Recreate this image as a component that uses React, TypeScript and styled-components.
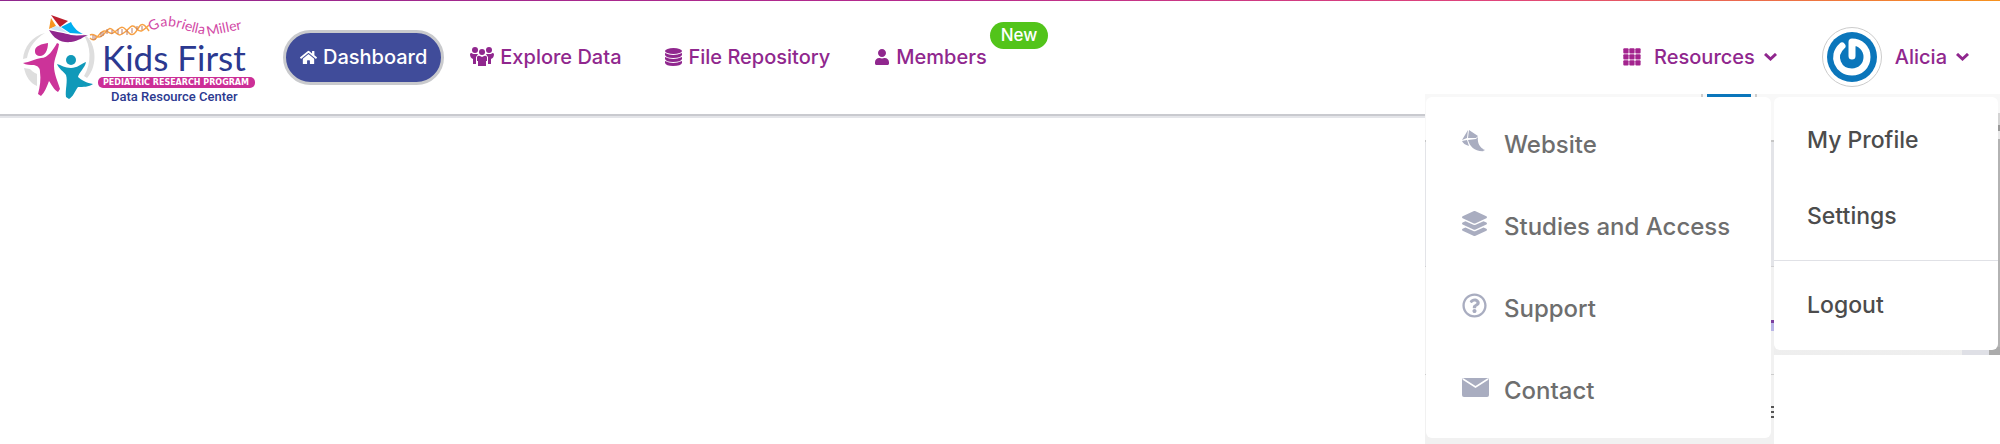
import React from "react";
import styled, { createGlobalStyle } from "styled-components";
import { FaHome, FaLayerGroup, FaUser, FaRegQuestionCircle } from "react-icons/fa";

const Global = createGlobalStyle`
  * { box-sizing: border-box; }
  body { margin: 0; background: #fff; font-family: Inter, "Liberation Sans", sans-serif; }
  button { font: inherit; border: 0; background: none; padding: 0; cursor: pointer; }
  svg { display: block; flex: none; }
`;

const Page = styled.div`
  position: relative;
  min-height: 100vh;
`;

const Header = styled.header`
  display: flex;
  align-items: center;
  height: 118px;
  padding: 0 31px 2px 19px;
  border-bottom: 2px solid #e4e5e9;
  box-shadow: inset 0 -2px 0 #c9cacf;
  background: linear-gradient(90deg, #90278e, #b52a8e 45%, #e0457b 75%, #f6921e) top / 100% 1px no-repeat;
`;

const LogoLink = styled.a`
  display: block;
  margin-right: 24px;
`;

const Nav = styled.nav`
  display: flex;
  align-items: center;
  flex: 1;
`;

const NavLink = styled.a<{ $active?: boolean }>`
  display: flex;
  align-items: center;
  gap: 6px;
  height: 55px;
  padding: 0 14px;
  margin-right: ${(p) => (p.$active ? "12px" : "16px")};
  border: ${(p) => (p.$active ? "3px solid #c9cacd" : "0")};
  border-radius: 28px;
  background: ${(p) => (p.$active ? "#404c9a" : "transparent")};
  color: ${(p) => (p.$active ? "#fff" : "#90278e")};
  font-size: 20px;
  font-weight: 500;
  text-decoration: none;
  white-space: nowrap;
`;

const Badged = styled.span`
  position: relative;
`;

const Badge = styled.span`
  position: absolute;
  left: calc(100% + 3px);
  top: -23px;
  height: 27px;
  padding: 0 11px;
  border-radius: 14px;
  background: #52c41a;
  color: #fff;
  font-size: 17px;
  line-height: 27px;
`;

const Actions = styled.div`
  display: flex;
  align-items: center;
  gap: 45px;
`;

const Trigger = styled.button<{ $gap: number }>`
  && {
    display: flex;
    align-items: center;
    gap: ${(p) => p.$gap}px;
    color: #90278e;
    font-size: 20px;
    font-weight: 500;
  }
`;

const TriggerLabel = styled.span`
  display: flex;
  align-items: center;
  gap: 9px;
`;

const Avatar = styled.span`
  width: 60px;
  height: 60px;
  padding: 4px;
  border: 1px solid #ccc;
  border-radius: 50%;
`;

const MenuFrame = styled.div<{ $right: number; $width: number }>`
  position: absolute;
  top: 94px;
  right: ${(p) => p.$right}px;
  width: ${(p) => p.$width}px;
`;

const ResourcesFrame = styled(MenuFrame)`
  padding: 3px 3px 6px 1px;
  background:
    linear-gradient(#7b3fa0 0 3px, #b9b5e6 3px) right 0 top 226px / 3px 11px no-repeat,
    linear-gradient(#555 0 2px, #eee 2px 5px, #555 5px 7px, #eee 7px 10px, #555 10px) right 0 top 312px / 3px 12px no-repeat,
    linear-gradient(90deg, #ccc 0 2px, #f8f8f8 2px 6px, #0b76bb 6px 50px, #f8f8f8 50px 54px, #ccc 54px) right 17px top 0 / 56px 3px no-repeat,
    linear-gradient(#f8f8f8 0 46px, #c6c6c6 46px 48px, #e3e4e8 48px 172px, #d0d0d2 172px 173px, #f1f1f1 173px 280px, #ccc 280px 281px, #f1f1f1 281px);
`;

const AccountFrame = styled(MenuFrame)`
  padding: 3px 2px 5px 0;
  background:
    linear-gradient(90deg, #dfe0e6 0 27px, #ababab 27px) right bottom / 38px 8px no-repeat,
    linear-gradient(#f8f8f8 0 19px, #d4d4d4 19px 31px, #999 31px 37px, #e8e8e8 37px 45px, #b3b3b3 45px) right top / 8px 100% no-repeat,
    linear-gradient(#f8f8f8 0 50%, #eee);
`;

const Panel = styled.ul<{ $pad: string }>`
  list-style: none;
  margin: 0;
  padding: ${(p) => p.$pad};
  border-radius: 6px;
  background: #fff;
`;

const MenuLink = styled.a<{ $large?: boolean }>`
  display: flex;
  align-items: center;
  height: ${(p) => (p.$large ? "82px" : "76px")};
  padding: 0 ${(p) => (p.$large ? "36px" : "33px")};
  color: ${(p) => (p.$large ? "#6e6e6e" : "#4c4c4c")};
  font-size: ${(p) => (p.$large ? "24px" : "23px")};
  font-weight: 500;
  text-decoration: none;
  white-space: nowrap;
`;

const MenuIcon = styled.span`
  width: 42px;
  padding-bottom: 6px;
  color: #a9adc0;
`;

const Divider = styled.li`
  height: 1px;
  margin: 6px 0;
  background: #e0e1e6;
`;

const Logo = () => (
  <svg width="240" height="92" viewBox="20 10 240 92" role="img" aria-label="Kids First Data Resource Center">
    <g fill="#dedede">
      <path d="M46 32C33 35 25 46 24 58L28 57C30 46 36 38 46 32Z" />
      <path d="M25 67C27 76 31 82 38 85L38 73C34 71 33 70 31 68Z" />
      <path d="M84 33C97 39 100 64 88 77L85 75C93 62 92 44 84 33Z" />
    </g>
    <path fill="#bd1e2d" d="M52 14L69 20L61 26Z" />
    <path fill="#f7941e" d="M52 17L57 25L50 28Z" />
    <path fill="#cfe6f5" d="M57 25L61 26L69 32L51 28Z" />
    <path fill="#00aeef" d="M62 26L72 21C75 28 80 31 84 33L71 32Z" />
    <path fill="#90278e" d="M50 29C57 31 66 32 72 34C78 35 83 34 89 34C84 36 80 40 72 41C62 42 55 38 50 29Z" />
    <path
      fill="#cc3399"
      d="M36 49C37 45 42 43 49 42C49 49 46 55 41 55C38 55 36 53 36 51ZM24 62C31 61 36 58 42 57C49 57 54 49 58 42L60 43C59 51 55 58 55 65C55 73 59 81 61 88L59 91C55 89 53 84 50 80C48 85 46 91 42 95L39 93C41 86 42 78 41 71C41 67 39 65 35 64C31 64 27 64 24 62Z"
    />
    <circle cx="72" cy="59" r="5" fill="#1099b9" />
    <path
      fill="#1099b9"
      d="M58 63C62 64 66 67 72 67C78 67 82 63 87 61C86 67 80 71 79 76C82 79 88 82 94 83C90 86 84 86 79 86C76 90 74 96 70 98L67 96C66 89 69 80 67 74C64 70 60 68 58 63Z"
    />
    <g fill="none" stroke="#f7a145" strokeWidth="1.500">
      <path d="M91 34C96 31 98 40 104 34S110 25 115 30S121 35 126 31S133 22 137 27S143 31 150 24" />
      <path d="M91 37C97 44 100 29 106 30S111 35 117 30S124 25 129 31S137 31 140 26S146 24 150 30" />
      <path stroke="#b97a66" strokeWidth="1" d="M94 34V39M96 35V39M102 31V36M104 31V35M108 28V33M113 29V33M119 28V33M123 28V33M128 29V34M133 27V32M138 25V29M143 25V29" />
    </g>
    <path id="founder" fill="none" d="M153 31Q162 22 180 27Q200 34 215 34Q232 30 256 26" />
    <text fill="#d24aa6" fontFamily="Lato, sans-serif" fontSize="14">
      <textPath href="#founder">Gabriella Miller</textPath>
    </text>
    <text x="103" y="70" fill="#2b3990" fontFamily="Lato, sans-serif" fontSize="35">
      Kids First
    </text>
    <rect x="99" y="76" width="157" height="11" rx="5" fill="#cc2f97" />
    <text x="104" y="84" fill="#fff" fontFamily="DejaVu Sans, sans-serif" fontWeight="700" fontSize="8">
      PEDIATRIC RESEARCH PROGRAM
    </text>
    <text x="112" y="100" fill="#2b3990" fontFamily="Roboto, sans-serif" fontWeight="500" fontSize="13">
      Data Resource Center
    </text>
  </svg>
);

const PeopleIcon = () => (
  <svg width="24" height="20" viewBox="0 0 24 20" fill="currentColor">
    <circle cx="5" cy="3" r="3" />
    <circle cx="19" cy="3" r="3" />
    <circle cx="12" cy="5" r="3" />
    <path d="M0 7Q1 5 3 7H8Q7 9 6 10V17H3V12Q0 11 0 7ZM24 7Q23 5 21 7H16Q17 9 18 10V17H21V12Q24 11 24 7Z" />
    <path d="M7 10Q8 8 10 9L12 10L14 9Q16 8 17 10V14H16V19H8V14H7Z" />
  </svg>
);

const DatabaseIcon = () => (
  <svg width="17" height="18" viewBox="0 0 17 18" fill="currentColor">
    <ellipse cx="8.500" cy="3" rx="8.500" ry="3" />
    <path d="M0 5Q8 9 17 5V7Q16 10 8 10Q1 10 0 7ZM0 9Q8 13 17 9V11Q16 14 8 14Q1 14 0 11ZM0 13Q8 17 17 13V15Q16 18 8 18Q1 18 0 15Z" />
  </svg>
);

const GridIcon = () => (
  <svg width="18" height="18" viewBox="0 0 18 18" fill="#a3238e">
    {[0, 6, 12].map((y) => [0, 6, 12].map((x) => <rect key={`${x}-${y}`} x={x + 0.3} y={y + 0.3} width="5.300" height="5.300" rx="1" />))}
  </svg>
);

const Chevron = () => (
  <svg width="13" height="8" viewBox="0 0 13 8" fill="none" stroke="currentColor" strokeWidth="3">
    <path d="M1 1L6.500 6L12 1" />
  </svg>
);

const PowerAvatar = () => (
  <svg width="50" height="50" viewBox="0 0 50 50">
    <circle cx="25" cy="25" r="25" fill="#0b76bb" />
    <g fill="none" stroke="#fff" strokeWidth="7" strokeLinecap="round" strokeLinejoin="round">
      <path d="M15 14C4 24 11 40 25 40C33 40 40 34 40 25C40 16 33 10 25 10V24" />
    </g>
  </svg>
);

const KiteIcon = () => (
  <svg width="24" height="22" viewBox="0 0 24 22" fill="currentColor">
    <path d="M6 0L5 8L0 10ZM7 0L16 6L14 8L6 8ZM0 11L5 10L7 16C3 15 1 13 0 11ZM6 10L14 9C14 14 18 19 23 21C13 22 8 17 6 10ZM16 7C15 13 18 18 23 20C18 20 13 15 14 9Z" />
  </svg>
);

const MailIcon = () => (
  <svg width="27" height="19" viewBox="0 0 27 19">
    <rect width="27" height="19" rx="2" fill="currentColor" />
    <path d="M1 1L13.500 9L26 1" fill="none" stroke="#fff" strokeWidth="1.500" />
  </svg>
);

const resources = [
  { label: "Website", icon: <KiteIcon /> },
  { label: "Studies and Access", icon: <FaLayerGroup size={25} /> },
  { label: "Support", icon: <FaRegQuestionCircle size={25} /> },
  { label: "Contact", icon: <MailIcon /> },
];

export default function App() {
  return (
    <Page>
      <Global />
      <Header>
        <LogoLink href="#">
          <Logo />
        </LogoLink>
        <Nav>
          <NavLink href="#dashboard" $active>
            <FaHome size={17} />
            Dashboard
          </NavLink>
          <NavLink href="#explore">
            <PeopleIcon />
            Explore Data
          </NavLink>
          <NavLink href="#files">
            <DatabaseIcon />
            File Repository
          </NavLink>
          <NavLink href="#members">
            <FaUser size={16} />
            <Badged>
              Members
              <Badge>New</Badge>
            </Badged>
          </NavLink>
        </Nav>
        <Actions>
          <Trigger type="button" $gap={13} aria-expanded="true">
            <GridIcon />
            <TriggerLabel>
              Resources
              <Chevron />
            </TriggerLabel>
          </Trigger>
          <Trigger type="button" $gap={13} aria-expanded="true">
            <Avatar>
              <PowerAvatar />
            </Avatar>
            <TriggerLabel>
              Alicia
              <Chevron />
            </TriggerLabel>
          </Trigger>
        </Actions>
      </Header>
      <ResourcesFrame $right={226} $width={349}>
        <Panel $pad="6px 0 7px">
          {resources.map((r) => (
            <li key={r.label}>
              <MenuLink href="#" $large>
                <MenuIcon>{r.icon}</MenuIcon>
                {r.label}
              </MenuLink>
            </li>
          ))}
        </Panel>
      </ResourcesFrame>
      <AccountFrame $right={0} $width={226}>
        <Panel $pad="5px 0 7px">
          <li>
            <MenuLink href="#profile">My Profile</MenuLink>
          </li>
          <li>
            <MenuLink href="#settings">Settings</MenuLink>
          </li>
          <Divider />
          <li>
            <MenuLink href="#logout">Logout</MenuLink>
          </li>
        </Panel>
      </AccountFrame>
    </Page>
  );
}
